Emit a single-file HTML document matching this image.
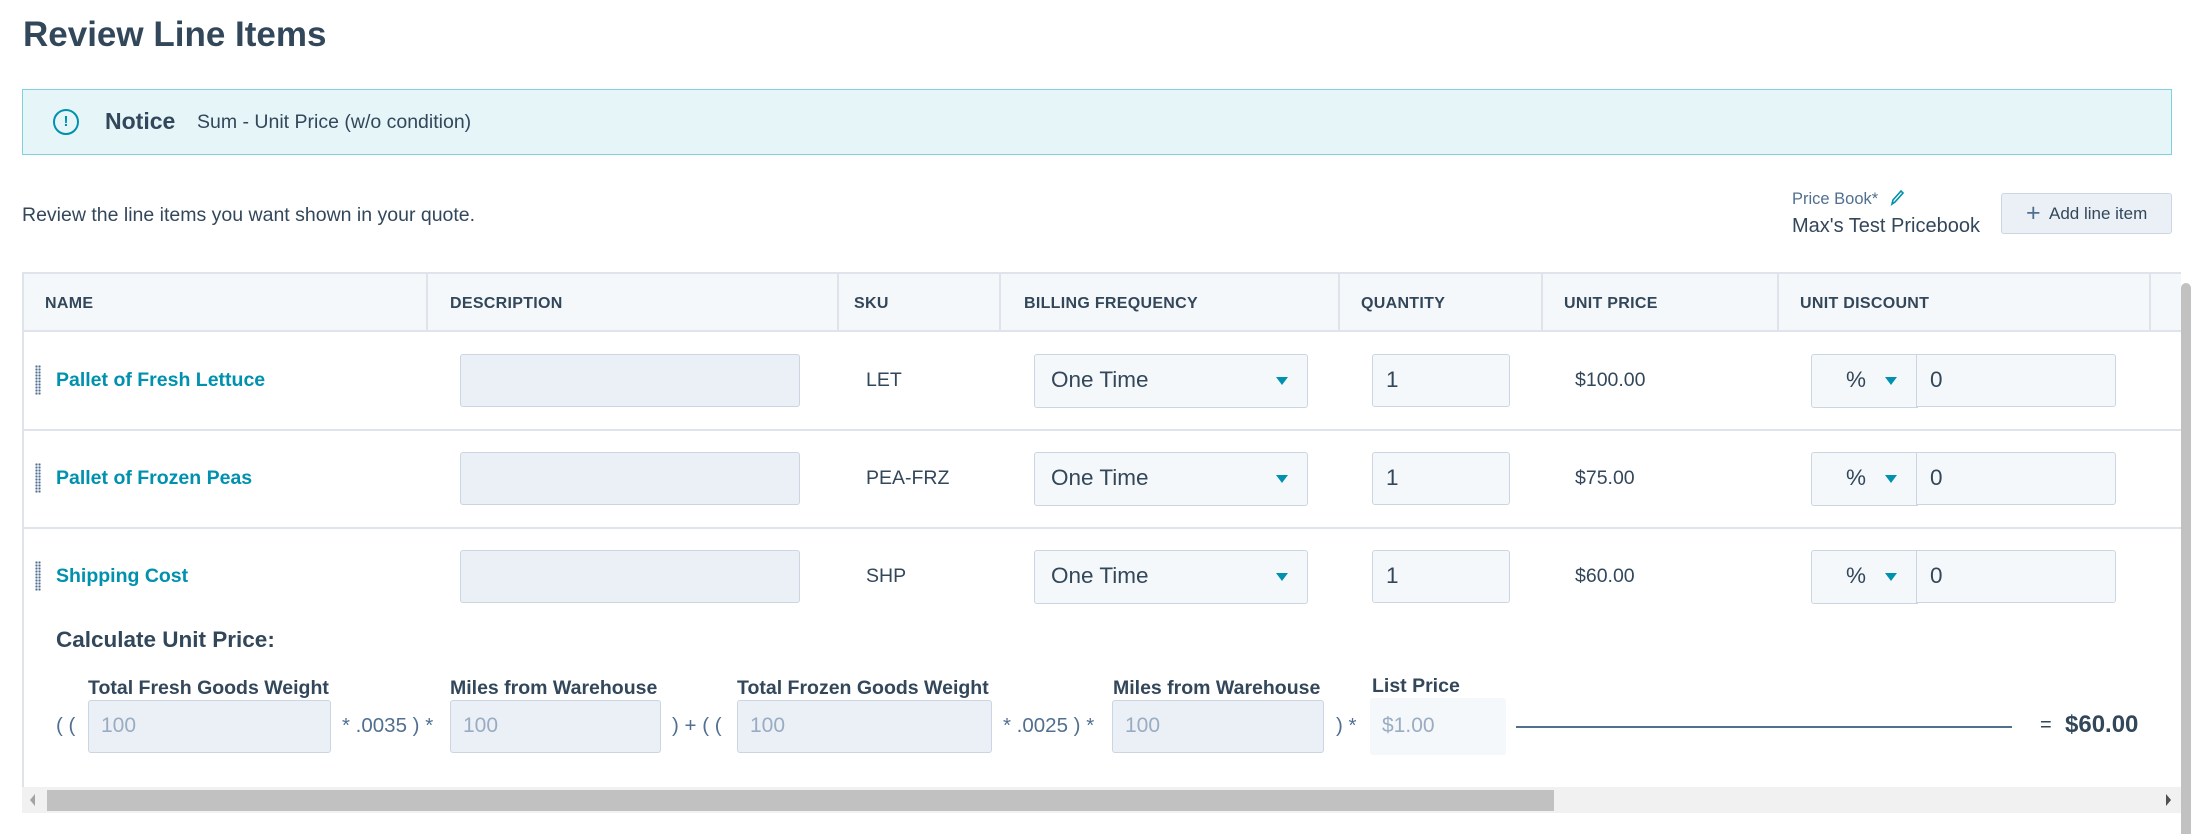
<!DOCTYPE html>
<html><head><meta charset="utf-8"><style>
*{box-sizing:border-box;margin:0;padding:0}
body{width:2191px;height:834px;background:#fff;font-family:"Liberation Sans",sans-serif;color:#33475b;position:relative;overflow:hidden}
.a{position:absolute;white-space:nowrap}
.in{position:absolute;background:#eaf0f6;border:1.5px solid #cbd6e2;border-radius:3px}
.q{position:absolute;background:#f5f8fa;border:1.5px solid #cbd6e2;border-radius:3px}
.th{position:absolute;top:295px;font-size:16px;font-weight:bold;letter-spacing:.3px}
.vs{position:absolute;top:273px;width:2px;height:59px;background:#dfe3eb}
.link{color:#0091ae;font-weight:bold;font-size:19.5px}
.tri{position:absolute;width:0;height:0;border-left:6px solid transparent;border-right:6px solid transparent;border-top:8px solid #0091ae}
.grip{position:absolute;width:6px;height:30px;background-image:radial-gradient(circle,#516f90 1px,transparent 1.3px);background-size:3px 3px}
.lbl{position:absolute;font-size:19.5px;font-weight:bold;top:677px}
.ph{position:absolute;font-size:21px;color:#99acc2}
.op{position:absolute;font-size:20.5px;color:#516f90;top:714px}
.sel{position:absolute;font-size:22.5px}
.cell{position:absolute;font-size:19.5px}
</style></head><body>
<div class="a" style="left:23px;top:15px;font-size:35px;font-weight:bold">Review Line Items</div>
<div class="a" style="left:22px;top:89px;width:2150px;height:66px;background:#e5f5f8;border:1.5px solid #7fd1de"></div>
<div class="a" style="left:53px;top:109px;width:26px;height:26px;border:2.5px solid #0091ae;border-radius:50%;color:#0091ae;font-size:15px;font-weight:bold;text-align:center;line-height:21px">!</div>
<div class="a" style="left:105px;top:108px;font-size:23px;font-weight:bold">Notice</div>
<div class="a" style="left:197px;top:111px;font-size:19.5px">Sum - Unit Price (w/o condition)</div>
<div class="a" style="left:22px;top:204px;font-size:19.5px">Review the line items you want shown in your quote.</div>
<div class="a" style="left:1792px;top:190px;font-size:16.5px;color:#516f90">Price Book*</div>
<svg class="a" style="left:1889px;top:189px" width="16" height="18" viewBox="0 0 16 18"><path d="M3 15 L4 11 L12 2 L14 4 L6 13 Z" fill="none" stroke="#0091ae" stroke-width="1.6"/></svg>
<div class="a" style="left:1792px;top:215px;font-size:20px">Max's Test Pricebook</div>
<div class="a" style="left:2001px;top:193px;width:171px;height:41px;background:#eaf0f6;border:1.5px solid #cbd6e2;border-radius:3px"></div>
<div class="a" style="left:2026px;top:199px;font-size:25px;color:#516f90;font-weight:300">+</div>
<div class="a" style="left:2049px;top:204px;font-size:17px;color:#33475b">Add line item</div>

<div class="a" style="left:22px;top:272px;width:2159px;height:60px;background:#f5f8fa;border-top:2px solid #dfe3eb;border-bottom:2px solid #dfe3eb"></div>
<div class="a" style="left:22px;top:272px;width:2px;height:516px;background:#dfe3eb"></div>
<div class="vs" style="left:426px"></div><div class="vs" style="left:837px"></div><div class="vs" style="left:999px"></div><div class="vs" style="left:1338px"></div><div class="vs" style="left:1541px"></div><div class="vs" style="left:1777px"></div><div class="vs" style="left:2149px"></div>
<div class="th" style="left:45px">NAME</div><div class="th" style="left:450px">DESCRIPTION</div><div class="th" style="left:854px">SKU</div><div class="th" style="left:1024px">BILLING FREQUENCY</div><div class="th" style="left:1361px">QUANTITY</div><div class="th" style="left:1564px">UNIT PRICE</div><div class="th" style="left:1800px">UNIT DISCOUNT</div>
<div class="a" style="left:24px;top:429px;width:2157px;height:2px;background:#dfe3eb"></div>
<div class="a" style="left:24px;top:527px;width:2157px;height:2px;background:#dfe3eb"></div>

<!-- row 1 -->
<div class="grip" style="left:35px;top:365px"></div><div class="a link" style="left:56px;top:369px">Pallet of Fresh Lettuce</div>
<div class="in" style="left:460px;top:354px;width:340px;height:53px"></div>
<div class="cell" style="left:866px;top:369px">LET</div>
<div class="q" style="left:1034px;top:354px;width:274px;height:54px"></div><div class="sel" style="left:1051px;top:367px">One Time</div><div class="tri" style="left:1276px;top:377px"></div>
<div class="q" style="left:1372px;top:354px;width:138px;height:53px"></div><div class="sel" style="left:1386px;top:367px">1</div>
<div class="cell" style="left:1575px;top:369px">$100.00</div>
<div class="q" style="left:1811px;top:354px;width:107px;height:54px;border-radius:3px 0 0 3px"></div><div class="q" style="left:1916px;top:354px;width:200px;height:53px;border-radius:0 3px 3px 0"></div>
<div class="sel" style="left:1846px;top:367px">%</div><div class="tri" style="left:1885px;top:377px"></div><div class="sel" style="left:1930px;top:367px">0</div>

<!-- row 2 -->
<div class="grip" style="left:35px;top:463px"></div><div class="a link" style="left:56px;top:467px">Pallet of Frozen Peas</div>
<div class="in" style="left:460px;top:452px;width:340px;height:53px"></div>
<div class="cell" style="left:866px;top:467px">PEA-FRZ</div>
<div class="q" style="left:1034px;top:452px;width:274px;height:54px"></div><div class="sel" style="left:1051px;top:465px">One Time</div><div class="tri" style="left:1276px;top:475px"></div>
<div class="q" style="left:1372px;top:452px;width:138px;height:53px"></div><div class="sel" style="left:1386px;top:465px">1</div>
<div class="cell" style="left:1575px;top:467px">$75.00</div>
<div class="q" style="left:1811px;top:452px;width:107px;height:54px;border-radius:3px 0 0 3px"></div><div class="q" style="left:1916px;top:452px;width:200px;height:53px;border-radius:0 3px 3px 0"></div>
<div class="sel" style="left:1846px;top:465px">%</div><div class="tri" style="left:1885px;top:475px"></div><div class="sel" style="left:1930px;top:465px">0</div>

<!-- row 3 -->
<div class="grip" style="left:35px;top:561px"></div><div class="a link" style="left:56px;top:565px">Shipping Cost</div>
<div class="in" style="left:460px;top:550px;width:340px;height:53px"></div>
<div class="cell" style="left:866px;top:565px">SHP</div>
<div class="q" style="left:1034px;top:550px;width:274px;height:54px"></div><div class="sel" style="left:1051px;top:563px">One Time</div><div class="tri" style="left:1276px;top:573px"></div>
<div class="q" style="left:1372px;top:550px;width:138px;height:53px"></div><div class="sel" style="left:1386px;top:563px">1</div>
<div class="cell" style="left:1575px;top:565px">$60.00</div>
<div class="q" style="left:1811px;top:550px;width:107px;height:54px;border-radius:3px 0 0 3px"></div><div class="q" style="left:1916px;top:550px;width:200px;height:53px;border-radius:0 3px 3px 0"></div>
<div class="sel" style="left:1846px;top:563px">%</div><div class="tri" style="left:1885px;top:573px"></div><div class="sel" style="left:1930px;top:563px">0</div>

<!-- calc -->
<div class="a" style="left:56px;top:627px;font-size:22.5px;font-weight:bold">Calculate Unit Price:</div>
<div class="lbl" style="left:88px">Total Fresh Goods Weight</div>
<div class="lbl" style="left:450px">Miles from Warehouse</div>
<div class="lbl" style="left:737px">Total Frozen Goods Weight</div>
<div class="lbl" style="left:1113px">Miles from Warehouse</div>
<div class="lbl" style="left:1372px;top:675px">List Price</div>
<div class="in" style="left:88px;top:700px;width:243px;height:53px"></div><div class="ph" style="left:101px;top:714px">100</div>
<div class="in" style="left:450px;top:700px;width:211px;height:53px"></div><div class="ph" style="left:463px;top:714px">100</div>
<div class="in" style="left:737px;top:700px;width:255px;height:53px"></div><div class="ph" style="left:750px;top:714px">100</div>
<div class="in" style="left:1112px;top:700px;width:212px;height:53px"></div><div class="ph" style="left:1125px;top:714px">100</div>
<div class="a" style="left:1370px;top:698px;width:136px;height:57px;background:#f5f8fa;border-radius:3px"></div><div class="ph" style="left:1382px;top:714px">$1.00</div>
<div class="op" style="left:56px">( (</div>
<div class="op" style="left:342px">* .0035 ) *</div>
<div class="op" style="left:672px">) + ( (</div>
<div class="op" style="left:1003px">* .0025 ) *</div>
<div class="op" style="left:1336px">) *</div>
<div class="a" style="left:1516px;top:726px;width:496px;height:2px;background:#516f90"></div>
<div class="a" style="left:2040px;top:714px;font-size:20px">=</div>
<div class="a" style="left:2065px;top:711px;font-size:24px;font-weight:bold">$60.00</div>

<!-- scrollbars -->
<div class="a" style="left:22px;top:787px;width:2159px;height:26px;background:#f1f1f1"></div>
<div class="a" style="left:47px;top:790px;width:1507px;height:21px;background:#c1c1c1"></div>
<div class="a" style="left:30px;top:794px;width:0;height:0;border-top:6px solid transparent;border-bottom:6px solid transparent;border-right:5px solid #a3a3a3"></div>
<div class="a" style="left:2166px;top:794px;width:0;height:0;border-top:6px solid transparent;border-bottom:6px solid transparent;border-left:5px solid #505050"></div>
<div class="a" style="left:2181px;top:283px;width:10px;height:551px;background:#c1c1c1;border-radius:5px 5px 0 0"></div>
</body></html>
